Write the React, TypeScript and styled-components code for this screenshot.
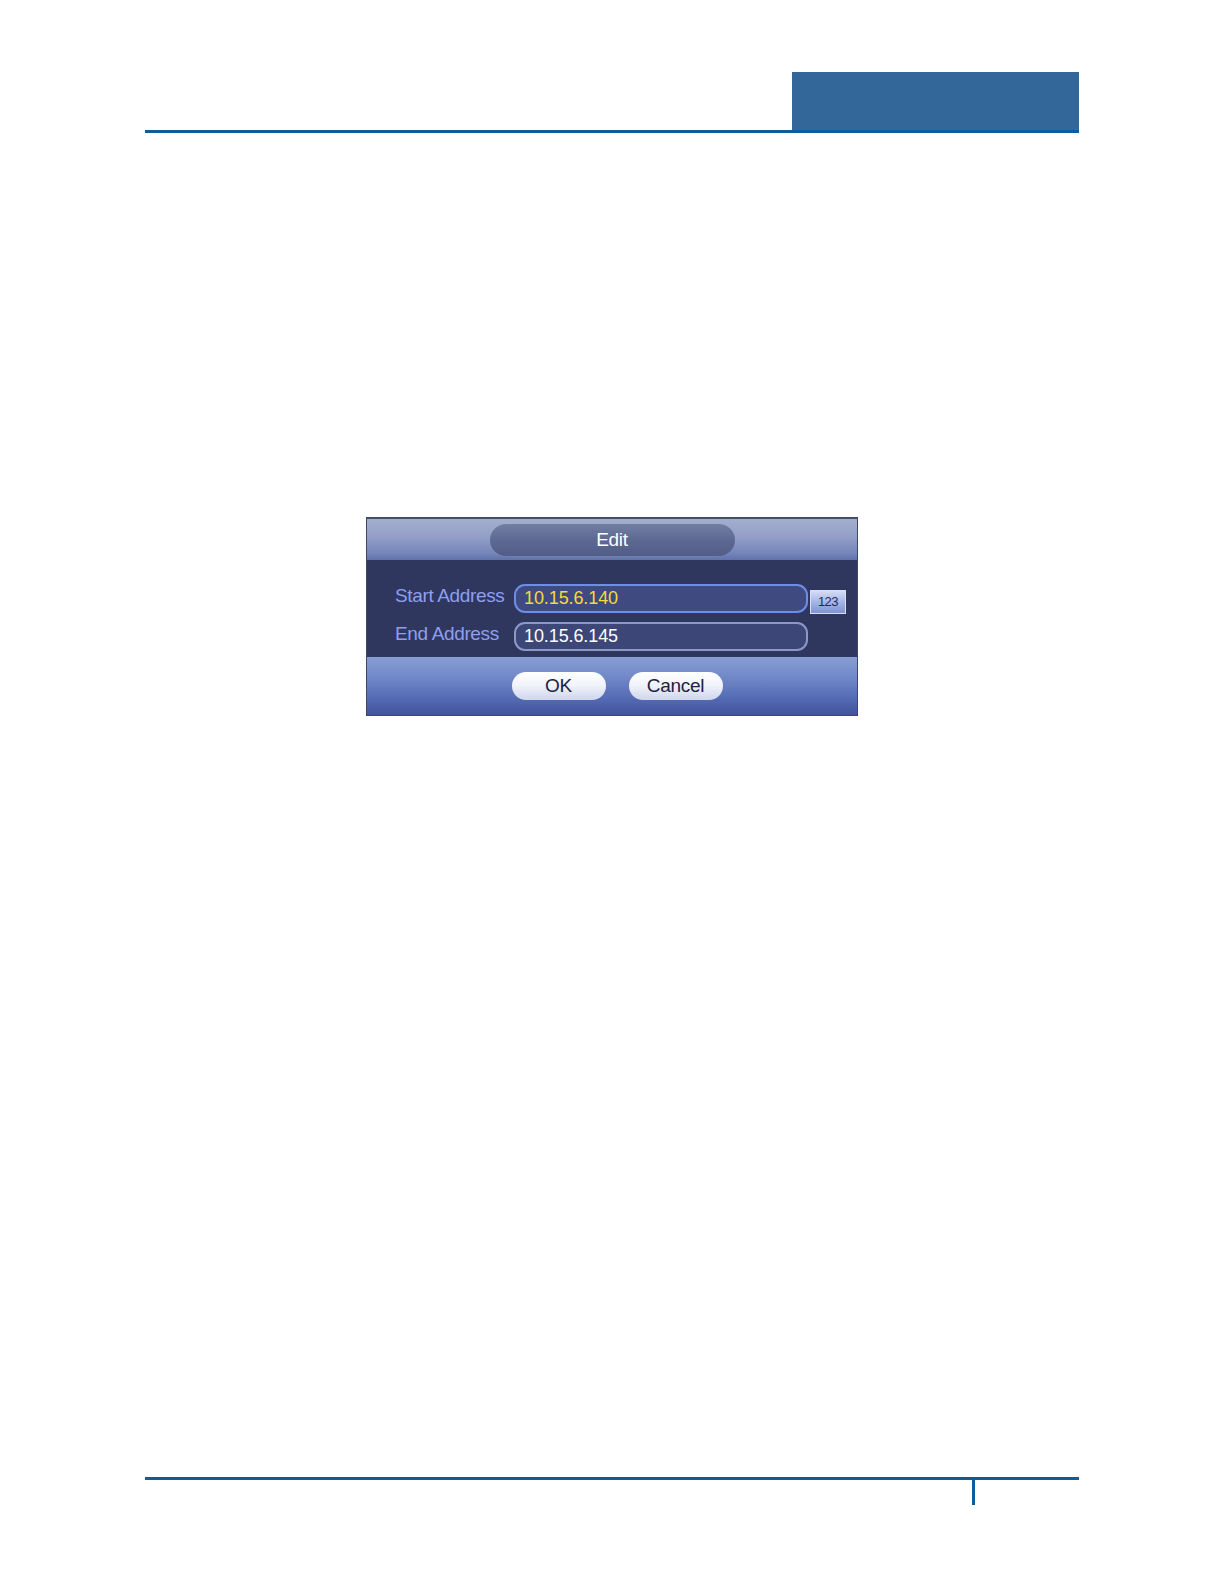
import React from 'react';
import styled, { createGlobalStyle } from 'styled-components';

const GlobalStyle = createGlobalStyle`
  html, body {
    margin: 0;
    padding: 0;
    background: #ffffff;
  }
  body {
    font-family: "Liberation Sans", Arial, sans-serif;
  }
`;

const Page = styled.div`
  width: 1224px;
  height: 1584px;
  display: flex;
  flex-direction: column;
  align-items: center;
  background: #ffffff;
`;

const Header = styled.header`
  width: 934px;
  margin-top: 72px;
  display: flex;
  flex-direction: column;
  align-items: flex-end;
`;

const HeaderTab = styled.div`
  width: 287px;
  height: 58px;
  background: #336699;
`;

const Rule = styled.div`
  width: 100%;
  height: 3px;
  background: #0b5e9e;
`;

const Footer = styled.footer`
  width: 934px;
  margin-top: 762px;
  display: flex;
  flex-direction: column;
`;

const FooterTick = styled.div`
  width: 3px;
  height: 25px;
  margin-left: 827px;
  background: #0b5e9e;
`;

const Dialog = styled.div`
  width: 490px;
  margin-top: 385px;
  display: flex;
  flex-direction: column;
  box-shadow: 0 0 0 1px #3e4866;
  font-family: "Liberation Sans", Arial, sans-serif;
`;

const TitleBar = styled.div`
  height: 42px;
  display: flex;
  justify-content: center;
  align-items: flex-start;
  padding-top: 5px;
  box-sizing: border-box;
  background: linear-gradient(#a4aecd 0%, #929ec6 45%, #7384b9 85%, #6172a8 100%);
  border-top: 1px solid #47526e;
`;

const TitlePill = styled.div`
  width: 245px;
  height: 32px;
  border-radius: 16px;
  display: flex;
  align-items: center;
  justify-content: center;
  background: linear-gradient(#737ea4 0%, #5d6992 50%, #515d87 100%);
  color: #ffffff;
  font-size: 19px;
  letter-spacing: -0.3px;
`;

const Body = styled.div`
  height: 97px;
  box-sizing: border-box;
  padding: 24px 0 0 28px;
  background: #2f375f;
  display: grid;
  grid-template-columns: 117px 294px 38px;
  grid-auto-rows: 29px;
  row-gap: 9px;
  column-gap: 2px;
  align-items: center;
`;

const Label = styled.span`
  color: #8e9ff0;
  font-size: 19px;
  letter-spacing: -0.35px;
  white-space: nowrap;
  line-height: 1;
  margin-top: -6px;
`;

const Field = styled.div<{ $active?: boolean }>`
  height: 29px;
  box-sizing: border-box;
  border-radius: 11px;
  border: 2px solid ${(p) => (p.$active ? '#6d8de6' : '#8e98c8')};
  background: ${(p) => (p.$active ? '#3e4a80' : '#3c4677')};
  color: ${(p) => (p.$active ? '#f7d93a' : '#ffffff')};
  font-size: 18px;
  letter-spacing: -0.1px;
  display: flex;
  align-items: center;
  padding-left: 8px;
`;

const KeyButton = styled.div`
  width: 36px;
  height: 24px;
  box-sizing: border-box;
  border: 1px solid #d7def5;
  background: linear-gradient(#d3dcf7 0%, #a6b5e6 50%, #7f93d2 100%);
  color: #1f2b5a;
  font-size: 13px;
  display: flex;
  align-items: center;
  justify-content: center;
  margin-top: 6px;
  letter-spacing: -0.5px;
`;

const ButtonBar = styled.div`
  height: 58px;
  box-sizing: border-box;
  padding: 15px 0 0 10px;
  display: flex;
  justify-content: center;
  gap: 23px;
  background: linear-gradient(#889dd5 0%, #7188c8 35%, #566cb4 70%, #40539c 100%);
`;

const PillButton = styled.div`
  width: 94px;
  height: 28px;
  border-radius: 14px;
  background: linear-gradient(#ffffff 0%, #f2f4fb 45%, #cfd6ee 100%);
  color: #1c2340;
  font-size: 19px;
  display: flex;
  align-items: center;
  justify-content: center;
  letter-spacing: -0.3px;
`;

const App: React.FC = () => (
  <>
    <GlobalStyle />
    <Page>
      <Header>
        <HeaderTab />
        <Rule />
      </Header>

      <Dialog>
        <TitleBar>
          <TitlePill>Edit</TitlePill>
        </TitleBar>
        <Body>
          <Label>Start Address</Label>
          <Field $active>10.15.6.140</Field>
          <KeyButton>123</KeyButton>
          <Label>End Address</Label>
          <Field>10.15.6.145</Field>
        </Body>
        <ButtonBar>
          <PillButton>OK</PillButton>
          <PillButton>Cancel</PillButton>
        </ButtonBar>
      </Dialog>

      <Footer>
        <Rule />
        <FooterTick />
      </Footer>
    </Page>
  </>
);

export default App;
